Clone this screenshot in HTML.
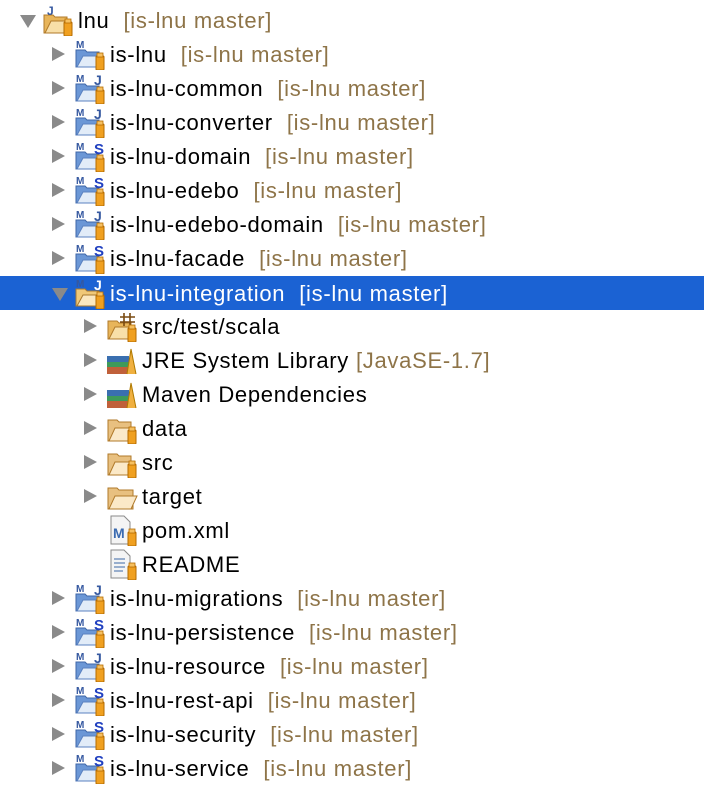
<!DOCTYPE html>
<html><head><meta charset="utf-8"><style>
body{margin:0;width:704px;height:790px;background:#fff;overflow:hidden;position:relative;font-family:"Liberation Sans",Arial,sans-serif;font-size:22px;letter-spacing:0.7px;color:#000}
.r{position:absolute;left:0;width:704px;height:34px;line-height:34px;white-space:nowrap}
.sel{background:#1b62d3;color:#fff}
.t{position:absolute;top:10px;width:0;height:0;border-top:7px solid transparent;border-bottom:7px solid transparent;border-left:13px solid #8a8a8a}
.d{position:absolute;top:12px;width:0;height:0;border-left:8px solid transparent;border-right:8px solid transparent;border-top:13px solid #8a8a8a}
.i{position:absolute;top:1px}
.x{position:absolute;top:1px}
.l{color:#8e7448;margin-left:14px}
.sel .l{color:#fff}
</style></head><body>
<svg width="0" height="0" style="position:absolute">
<defs>
<symbol id="jar" viewBox="0 0 32 32"><rect x="22" y="18" width="8" height="14" rx="1" fill="#f0a020" stroke="#b56b00" stroke-width="1"/><rect x="23" y="15" width="6" height="4" fill="#f6c060" stroke="#b56b00" stroke-width=".8"/></symbol>
<symbol id="pf" viewBox="0 0 32 32"><path d="M2 12h9l2 2h12v15H2z" fill="#6b97d6" stroke="#3f67a8"/><path d="M3 29l6-11h19l-5 11z" fill="#e2ecf8" stroke="#5b82c0"/><text x="2" y="10" font-size="10" font-weight="bold" fill="#3558a0" font-family="Liberation Sans" letter-spacing="0">M</text><use href="#jar"/></symbol>
</defs></svg>

<div class="r" style="top:3px"><span class="d" style="left:20px"></span><svg class="i" style="left:42px" width="32" height="32" viewBox="0 0 32 32"><path d="M2 11h9l2 2h12v16H2z" fill="#e8b55a" stroke="#b07a2a"/><path d="M3 29l6-12h19l-5 12z" fill="#f8dfa8" stroke="#b07a2a"/><text x="5" y="11" font-size="12" font-weight="bold" fill="#3558a0" font-family="Liberation Sans">J</text><use href="#jar"/></svg><span class="x" style="left:78px">lnu<span class="l">[is-lnu master]</span></span></div>

<div class="r" style="top:37px"><span class="t" style="left:52px"></span><svg class="i" style="left:74px" width="32" height="32"><use href="#pf"/></svg><span class="x" style="left:110px">is-lnu<span class="l">[is-lnu master]</span></span></div>
<div class="r" style="top:71px"><span class="t" style="left:52px"></span><svg class="i" style="left:74px" width="32" height="32"><use href="#pf"/><text x="20" y="13" font-size="14" font-weight="bold" fill="#3558a0">J</text></svg><span class="x" style="left:110px">is-lnu-common<span class="l">[is-lnu master]</span></span></div>
<div class="r" style="top:105px"><span class="t" style="left:52px"></span><svg class="i" style="left:74px" width="32" height="32"><use href="#pf"/><text x="20" y="13" font-size="14" font-weight="bold" fill="#3558a0">J</text></svg><span class="x" style="left:110px">is-lnu-converter<span class="l">[is-lnu master]</span></span></div>
<div class="r" style="top:139px"><span class="t" style="left:52px"></span><svg class="i" style="left:74px" width="32" height="32"><use href="#pf"/><text x="20" y="14" font-size="15" font-weight="bold" fill="#2040c0">S</text></svg><span class="x" style="left:110px">is-lnu-domain<span class="l">[is-lnu master]</span></span></div>
<div class="r" style="top:173px"><span class="t" style="left:52px"></span><svg class="i" style="left:74px" width="32" height="32"><use href="#pf"/><text x="20" y="14" font-size="15" font-weight="bold" fill="#2040c0">S</text></svg><span class="x" style="left:110px">is-lnu-edebo<span class="l">[is-lnu master]</span></span></div>
<div class="r" style="top:207px"><span class="t" style="left:52px"></span><svg class="i" style="left:74px" width="32" height="32"><use href="#pf"/><text x="20" y="13" font-size="14" font-weight="bold" fill="#3558a0">J</text></svg><span class="x" style="left:110px">is-lnu-edebo-domain<span class="l">[is-lnu master]</span></span></div>
<div class="r" style="top:241px"><span class="t" style="left:52px"></span><svg class="i" style="left:74px" width="32" height="32"><use href="#pf"/><text x="20" y="14" font-size="15" font-weight="bold" fill="#2040c0">S</text></svg><span class="x" style="left:110px">is-lnu-facade<span class="l">[is-lnu master]</span></span></div>
<div class="r sel" style="top:276px"><span class="d" style="left:52px"></span><svg class="i" style="left:74px" width="32" height="32"><path d="M2 12h9l2 2h12v15H2z" fill="#f0c878" stroke="#a87a30"/><path d="M3 29l6-11h19l-5 11z" fill="#fbe8c0" stroke="#a87a30"/><text x="2" y="10" font-size="10" font-weight="bold" fill="#3558a0">M</text><use href="#jar"/><text x="20" y="13" font-size="14" font-weight="bold" fill="#fff">J</text></svg><span class="x" style="left:110px">is-lnu-integration<span class="l">[is-lnu master]</span></span></div>

<div class="r" style="top:309px"><span class="t" style="left:84px"></span><svg class="i" style="left:106px" width="32" height="32"><path d="M2 11h9l2 2h12v16H2z" fill="#e8b55a" stroke="#b07a2a"/><path d="M3 29l6-12h19l-5 12z" fill="#f8dfa8" stroke="#b07a2a"/><path d="M18 3v13M24 3v13M14 7h15M14 12h15" stroke="#7a4a10" stroke-width="1.6"/><use href="#jar"/></svg><span class="x" style="left:142px">src/test/scala</span></div>
<div class="r" style="top:343px"><span class="t" style="left:84px"></span><svg class="i" style="left:106px" width="32" height="32"><rect x="1" y="12" width="22" height="6" fill="#3a6fb0"/><rect x="1" y="18" width="22" height="5" fill="#3e9a5a"/><rect x="1" y="23" width="22" height="7" fill="#c0603a"/><path d="M21 30l4-25 5 25" fill="#f0b040" stroke="#b07a00"/></svg><span class="x" style="left:142px">JRE System Library<span class="l" style="margin-left:7px">[JavaSE-1.7]</span></span></div>
<div class="r" style="top:377px"><span class="t" style="left:84px"></span><svg class="i" style="left:106px" width="32" height="32"><rect x="1" y="12" width="22" height="6" fill="#3a6fb0"/><rect x="1" y="18" width="22" height="5" fill="#3e9a5a"/><rect x="1" y="23" width="22" height="7" fill="#c0603a"/><path d="M21 30l4-25 5 25" fill="#f0b040" stroke="#b07a00"/></svg><span class="x" style="left:142px">Maven Dependencies</span></div>
<div class="r" style="top:411px"><span class="t" style="left:84px"></span><svg class="i" style="left:106px" width="32" height="32"><path d="M2 8h9l2 2h12v19H2z" fill="#e8c080" stroke="#b07a2a"/><path d="M3 29l6-13h20l-6 13z" fill="#fbe9c8" stroke="#b07a2a"/><use href="#jar"/></svg><span class="x" style="left:142px">data</span></div>
<div class="r" style="top:445px"><span class="t" style="left:84px"></span><svg class="i" style="left:106px" width="32" height="32"><path d="M2 8h9l2 2h12v19H2z" fill="#e8c080" stroke="#b07a2a"/><path d="M3 29l6-13h20l-6 13z" fill="#fbe9c8" stroke="#b07a2a"/><use href="#jar"/></svg><span class="x" style="left:142px">src</span></div>
<div class="r" style="top:479px"><span class="t" style="left:84px"></span><svg class="i" style="left:106px" width="32" height="32"><path d="M2 8h9l2 2h14v19H2z" fill="#e8c080" stroke="#b07a2a"/><path d="M3 29l6-13h22l-6 13z" fill="#fbe9c8" stroke="#b07a2a"/></svg><span class="x" style="left:142px">target</span></div>
<div class="r" style="top:513px"><svg class="i" style="left:106px" width="32" height="32"><path d="M5 2h13l6 6v22H5z" fill="#f4f4f4" stroke="#8a8a8a"/><text x="7" y="24" font-size="14" font-weight="bold" fill="#3a6ab0">M</text><use href="#jar"/></svg><span class="x" style="left:142px">pom.xml</span></div>
<div class="r" style="top:547px"><svg class="i" style="left:106px" width="32" height="32"><path d="M5 2h13l6 6v22H5z" fill="#f4f4f4" stroke="#8a8a8a"/><path d="M8 11h11M8 15h11M8 19h11M8 23h9" stroke="#7a96c0" stroke-width="1.5"/><use href="#jar"/></svg><span class="x" style="left:142px">README</span></div>

<div class="r" style="top:581px"><span class="t" style="left:52px"></span><svg class="i" style="left:74px" width="32" height="32"><use href="#pf"/><text x="20" y="13" font-size="14" font-weight="bold" fill="#3558a0">J</text></svg><span class="x" style="left:110px">is-lnu-migrations<span class="l">[is-lnu master]</span></span></div>
<div class="r" style="top:615px"><span class="t" style="left:52px"></span><svg class="i" style="left:74px" width="32" height="32"><use href="#pf"/><text x="20" y="14" font-size="15" font-weight="bold" fill="#2040c0">S</text></svg><span class="x" style="left:110px">is-lnu-persistence<span class="l">[is-lnu master]</span></span></div>
<div class="r" style="top:649px"><span class="t" style="left:52px"></span><svg class="i" style="left:74px" width="32" height="32"><use href="#pf"/><text x="20" y="13" font-size="14" font-weight="bold" fill="#3558a0">J</text></svg><span class="x" style="left:110px">is-lnu-resource<span class="l">[is-lnu master]</span></span></div>
<div class="r" style="top:683px"><span class="t" style="left:52px"></span><svg class="i" style="left:74px" width="32" height="32"><use href="#pf"/><text x="20" y="14" font-size="15" font-weight="bold" fill="#2040c0">S</text></svg><span class="x" style="left:110px">is-lnu-rest-api<span class="l">[is-lnu master]</span></span></div>
<div class="r" style="top:717px"><span class="t" style="left:52px"></span><svg class="i" style="left:74px" width="32" height="32"><use href="#pf"/><text x="20" y="14" font-size="15" font-weight="bold" fill="#2040c0">S</text></svg><span class="x" style="left:110px">is-lnu-security<span class="l">[is-lnu master]</span></span></div>
<div class="r" style="top:751px"><span class="t" style="left:52px"></span><svg class="i" style="left:74px" width="32" height="32"><use href="#pf"/><text x="20" y="14" font-size="15" font-weight="bold" fill="#2040c0">S</text></svg><span class="x" style="left:110px">is-lnu-service<span class="l">[is-lnu master]</span></span></div>
</body></html>
